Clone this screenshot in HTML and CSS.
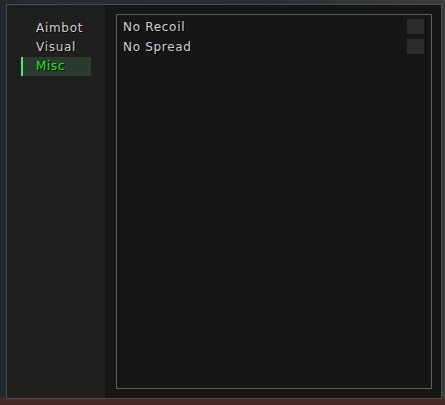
FILE: index.html
```html
<!DOCTYPE html>
<html>
<head>
<meta charset="utf-8">
<link rel="stylesheet" href="styles.css">
</head>
<body>
<div class="window">
  <nav class="sidebar">
    <div class="tab">Aimbot</div>
    <div class="tab">Visual</div>
    <div class="tab active">Misc</div>
  </nav>
  <main class="content">
    <div class="group">
      <div class="row"><span class="label">No Recoil</span><span class="check"></span></div>
      <div class="row"><span class="label">No Spread</span><span class="check"></span></div>
    </div>
  </main>
</div>
</body>
</html>
```

FILE: styles.css
```css
html, body {
  margin: 0;
  padding: 0;
}
body {
  width: 445px;
  height: 405px;
  overflow: hidden;
  background:
    linear-gradient(to bottom, rgba(0,0,0,0) 0, rgba(0,0,0,0) 396px, #4a2a22 399px, #3a2a26 405px),
    linear-gradient(to right, #23292e 0, #2a2f33 60%, #3c3e3a 100%);
  font-family: "DejaVu Sans", Verdana, sans-serif;
  font-size: 12px;
  letter-spacing: 0.7px;
  padding-top: 4px;
  padding-left: 6px;
  box-sizing: border-box;
}
.window {
  width: 436px;
  height: 395px;
  box-sizing: border-box;
  border: 1px solid #4c4c4c;
  display: flex;
  background: #161616;
}
.sidebar {
  width: 98px;
  flex: none;
  background: #1f1f1f;
  padding-top: 14px;
  padding-left: 14px;
  box-sizing: border-box;
  display: flex;
  flex-direction: column;
}
.tab {
  width: 70px;
  height: 19px;
  line-height: 19px;
  padding-left: 15px;
  box-sizing: border-box;
  color: #cfcfcf;
  text-shadow: 1px 1px 0 #000;
}
.tab.active {
  background: #2b3b2f;
  border-left: 2px solid #55e08a;
  padding-left: 13px;
  color: #22e622;
}
.content {
  flex: 1;
  padding: 9px 9px 9px 11px;
  display: flex;
}
.group {
  flex: 1;
  border: 1px solid #5a5a5a;
  display: flex;
  flex-direction: column;
}
.row {
  height: 20px;
  display: flex;
  align-items: flex-start;
  justify-content: space-between;
  padding-left: 6px;
  padding-right: 7px;
}
.label {
  color: #d2d2d2;
  text-shadow: 1px 1px 0 #000;
  line-height: 16px;
  margin-top: 4px;
}
.check {
  width: 17px;
  height: 15px;
  background: #2b2b2b;
  margin-top: 4px;
}
```
